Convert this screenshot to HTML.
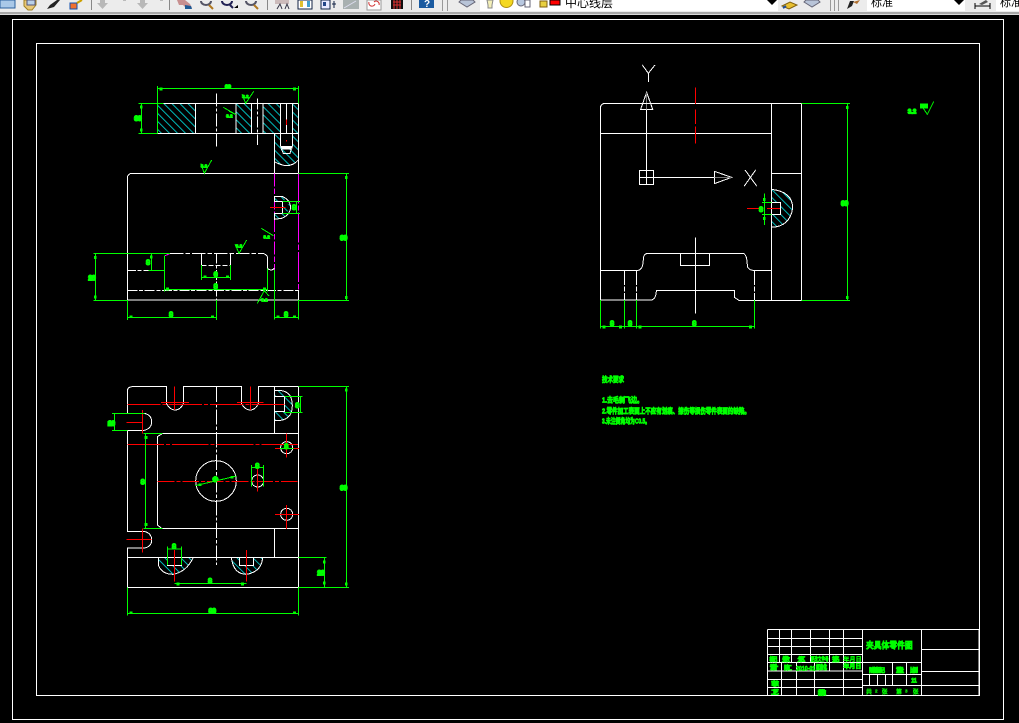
<!DOCTYPE html>
<html><head><meta charset="utf-8"><style>
html,body{margin:0;padding:0;background:#000;width:1019px;height:723px;overflow:hidden}
svg{display:block}
.w,.w *{fill:none;stroke:#fff;stroke-width:3}
.g,.g *{fill:none;stroke:#0f0;stroke-width:3}
.r,.r *{fill:none;stroke:#f00;stroke-width:3}
.m,.m *{fill:none;stroke:#f0f;stroke-width:3}
.a{fill:none;stroke:#0f0;stroke-width:8}
text{font-family:"Liberation Sans","Noto Sans CJK SC",sans-serif}
.d{font:bold 18px "Liberation Sans",sans-serif;fill:#0f0;stroke:#0f0;stroke-width:6;text-anchor:middle}
.t{font-family:"Liberation Sans","Noto Sans CJK SC",sans-serif;font-weight:700;fill:#0f0;stroke:#0f0;stroke-width:.8}
.tb{font-size:11px;fill:#000}
</style></head><body>
<svg width="1019" height="723" viewBox="0 0 1019 723" xmlns="http://www.w3.org/2000/svg">
<defs>
<pattern id="h" width="17" height="17" patternUnits="userSpaceOnUse" patternTransform="rotate(45)"><line x1="0" x2="17" y1="8" y2="8" stroke="#0ff" stroke-width="2.2"/></pattern>
</defs>
<rect width="1019" height="723" fill="#000"/>

<!-- toolbar -->
<rect width="1019" height="12" fill="#ececec"/>
<rect y="12" width="1019" height="2" fill="#a8a8a8"/>
<rect y="14" width="1019" height="1" fill="#dcdcdc"/>
<g>
<rect x="0" y="0" width="15" height="8" fill="#a9c8e8" stroke="#2a5f9e"/>
<path d="M24 0h12v5l-4 5h-4l-4-4z" fill="#e8c878" stroke="#a08020"/><rect x="27" y="0" width="8" height="5" fill="#b8d0e8" stroke="#557"/>
<path d="M47 9l3-4 7-5h3l-6 7z" fill="#222"/>
<rect x="70" y="3" width="7" height="6" fill="#f07030" stroke="#1050b0"/><path d="M77 3l5-3" stroke="#cca000" stroke-width="2"/>
<rect x="91" y="0" width="1" height="10" fill="#888"/>
<path d="M100 0h5v3h3l-5.500 6-5.500-6h3z" fill="#b8b8b8"/><rect x="123" y="0" width="3" height="1" fill="#bbb"/>
<path d="M140 0h5v3h3l-5.500 6-5.500-6h3z" fill="#b8b8b8"/><rect x="160" y="0" width="3" height="1" fill="#bbb"/>
<rect x="169" y="0" width="1" height="10" fill="#888"/>
<path d="M177 0h8l5 4 2 4h-6l-3-3h-4z" fill="#c89090"/><path d="M185 5l6 1 1 3h-7z" fill="#1f5a96"/>
<g fill="none" stroke-width="2"><path d="M201 1a5 4 0 0 0 10 0" stroke="#556"/><path d="M209 5l4 4" stroke="#b07820"/>
<path d="M222 1a5 4 0 0 0 10 0" stroke="#225"/><path d="M230 5l3 3" stroke="#225"/>
<path d="M246 1a5 4 0 0 0 10 0" stroke="#556"/><path d="M254 5l4 4" stroke="#b07820"/></g>
<path d="M234 8h4v-3z" fill="#000"/>
<rect x="267" y="0" width="1" height="10" fill="#888"/>
<rect x="275" y="0" width="14" height="4" fill="#cbb"/><path d="M277 9l3-5 2 5M285 9l2-5 2 5" stroke="#334" fill="none"/>
<rect x="298" y="0" width="14" height="9" fill="#fff" stroke="#124"/><rect x="300" y="1" width="3" height="6" fill="#e0c030"/><rect x="307" y="1" width="3" height="6" fill="#40a0d0"/>
<rect x="321" y="0" width="9" height="9" fill="#e8e8ff" stroke="#124"/><rect x="323" y="2" width="3" height="4" fill="#248"/><path d="M334 1v7M332 4h4" stroke="#124" fill="none"/>
<rect x="343" y="0" width="16" height="9" fill="#a8b0b0"/><path d="M344 8l12-7" stroke="#dde"/>
<rect x="367" y="0" width="14" height="10" fill="#fff" stroke="#999"/><path d="M369 2a3 3 0 0 0 6 2M374 2a3 3 0 0 1 5 3" stroke="#d03030" fill="none"/>
<rect x="391" y="0" width="12" height="9" fill="#111"/><path d="M393 2h8M393 5h8M394 0v9M397 0v9M400 0v9" stroke="#e03030" fill="none"/>
<rect x="411" y="0" width="1" height="10" fill="#888"/>
<rect x="419" y="0" width="15" height="8" fill="#1a5aa0"/><text x="424" y="7" font-size="10" font-weight="700" fill="#fff">?</text>
<rect x="442" y="0" width="1" height="11" fill="#999"/><rect x="447" y="0" width="1" height="11" fill="#999"/>
<path d="M459 2l8 5 8-5-2-2h-12z" fill="#b8c4d8" stroke="#667"/>
<rect x="480" y="0" width="298" height="11" fill="#fff"/>
<path d="M487 0h6l-1 5v3h-4v-3z" fill="#f4f0b8" stroke="#888"/>
<circle cx="506.500" cy="1" r="6.500" fill="#f4d820" stroke="#b09010"/>
<circle cx="521" cy="2" r="4" fill="#b8c8e0" stroke="#667"/><rect x="525" y="0" width="5" height="7" fill="none" stroke="#667"/>
<rect x="540" y="1" width="7" height="6" fill="#e8d040" stroke="#806010"/>
<rect x="550" y="0" width="10" height="5" fill="#f00" stroke="#000"/>
<text x="565" y="7" class="tb" style="font-size:12px">中心线层</text>
<path d="M767 0h10l-5 5z" fill="#000"/>
<path d="M782 6l8-4 7 3-8 4z" fill="#e8c030" stroke="#806010"/><path d="M783 8l3-2" stroke="#2050a0" stroke-width="2"/>
<path d="M804 2l8 5 8-5-2-2h-12z" fill="#b8c4d8" stroke="#667"/>
<rect x="830" y="0" width="1" height="11" fill="#999"/><rect x="834" y="0" width="1" height="11" fill="#999"/><rect x="838" y="0" width="1" height="11" fill="#999"/>
<path d="M847 9l3-8h4l-2 5z" fill="#222"/><path d="M853 2l7-2-3 4z" fill="#b07030"/>
<rect x="867" y="0" width="98" height="11" fill="#fff"/>
<text x="871" y="6" class="tb" fill="#333">标准</text>
<path d="M954 0h10l-5 5z" fill="#000"/>
<path d="M975 6h15M975 3v6M990 3v6" stroke="#000" fill="none"/><path d="M979 4l7-4 2 2-6 3z" fill="#555"/>
<rect x="996" y="0" width="23" height="11" fill="#fff"/>
<text x="1000" y="6" class="tb" fill="#333">标准</text>
</g>

<!-- frames -->
<rect x="12.500" y="19.500" width="991" height="700" fill="none" stroke="#fff"/>
<rect x="36.500" y="43.500" width="943" height="652" fill="none" stroke="#fff"/>

<!-- upper-left view -->
<g transform="translate(80,80) scale(.33333)" shape-rendering="crispEdges">
<path d="M232 70H347V160H232ZM468 70H515V160H468ZM549 70H601V160H549ZM637 70H655V160H637ZM583 160H601V200H637V160H655V240Q640 258 615 257Q595 252 583 245Z" fill="url(#h)"/>
<path d="M607 364L630 375V392L607 400ZM583 349H605Q625 358 607 364H583ZM583 400H607Q625 405 605 415H583Z" fill="url(#h)"/>
<path class="w" d="M232 70H655M232 160H655M347 70V160M468 70V160M515 70V160M549 70V160M601 70V200M637 70V200M232 70V160M655 70V280M583 160V280M601 200H637M604 207H634M604 207L610 220H630L634 207M583 245Q595 252 615 257Q640 258 655 240"/>
<path class="w" d="M601 202H637" style="stroke-width:6"/>
<path class="w" d="M409 40V203" stroke-dasharray="40 6 8 6"/>
<path class="w" d="M532 55V195" stroke-dasharray="34 6 8 6"/>
<path class="w" d="M619 70V118M619 135V160"/>
<path class="r" d="M619 118V135M619 180V184"/>
<path class="w" d="M142 660V295Q142 280 157 280H655M142 660H655M583 570V660M655 630V660"/>
<path class="m" d="M655 280V630" stroke-dasharray="90 6 16 6"/>
<path class="m" d="M583 280V570" stroke-dasharray="40 6 16 6"/>
<path class="m" d="M253 570V530Q253 527 268 522"/>
<path class="w" d="M142 631H655" stroke-dasharray="30 5 12 5"/>
<path class="w" d="M142 571H205" stroke-dasharray="26 5 12 5"/>
<path class="w" d="M270 520H548" stroke-dasharray="40 6 14 6"/>
<path class="w" d="M548 520Q558 522 562 530V565Q573 575 583 565"/>
<path class="w" d="M364 520V555M451 520V555"/>
<path class="w" d="M364 556H451" stroke-dasharray="16 5"/>
<path class="w" d="M409 520V660" stroke-dasharray="30 5 10 5"/>
<path class="w" d="M583 349H605Q630 358 632 382Q630 405 605 415L583 418V400H607V364H583Z"/>
<path class="r" d="M570 382H617"/>
<path class="g" d="M232 18V160M655 18V70M232 25H655M184 70V160M175 70H250M175 160H232M655 280H807M655 661H807M799 280V660M40 520H270M40 661H142M46 520V660M214 520V571M205 571H253M253 527V635M253 628H562M562 565V635M364 555V600M451 555V600M364 592H451M142 660V720M409 660V720M142 712H409M583 570V718M655 660V718M583 712H655M607 364H660M607 400H660M650 364V400"/>
<path class="a" d="M46 528v9M46 647v9M799 288v9M799 648v9M184 76v9M184 145v9M214 526v9M149 710h9M393 710h9M590 710h9M639 710h9M371 590h9M438 590h9M258 627h9M549 627h9M238 27h9M639 27h9"/>
<text class="d" x="444" y="24" style="font-size:14px">90</text>
<text class="d" x="174" y="122">30</text>
<text class="d" x="791" y="480">90</text>
<text class="d" x="36" y="600">26</text>
<text class="d" x="204" y="554">8</text>
<text class="d" x="407" y="626">8</text>
<text class="d" x="407" y="590">6</text>
<text class="d" x="273" y="710">8</text>
<text class="d" x="618" y="710">8</text>
<text class="d" x="642" y="389">8</text>
<path class="g" d="M362 250L373 280L395 240M486 42L497 70L521 34M430 82L468 104L448 94M465 492L477 520L500 480M544 445L580 467M532 670L553 632L567 648"/>
<text class="d" x="372" y="262" style="font-size:14px;stroke-width:3">3.2</text>
<text class="d" x="496" y="54" style="font-size:14px;stroke-width:3">3.2</text>
<text class="d" x="448" y="112" style="font-size:14px;stroke-width:3">3.2</text>
<text class="d" x="477" y="503" style="font-size:14px;stroke-width:3">3.2</text>
<text class="d" x="560" y="476" style="font-size:14px;stroke-width:3">3.2</text>
<text class="d" x="553" y="664" style="font-size:14px;stroke-width:3">3.2</text>
</g>

<!-- lower-left view -->
<g transform="translate(90,375) scale(.33333)" shape-rendering="crispEdges">
<path d="M553 47Q607 40 607 92Q607 140 553 137V110H583V65H553Z" fill="url(#h)"/>
<path d="M205 547V570Q215 598 250 598Q290 590 310 547H275V572H232V547Z" fill="url(#h)"/>
<path d="M424 547Q430 598 470 598Q515 590 518 547H490V572H449V547Z" fill="url(#h)"/>
<path class="w" d="M112 115V50Q112 35 127 35H229V85Q240 105 255 105Q272 105 280 85V35H454V85Q465 105 480 105Q497 105 505 85V35H625V637H112V519H163Q185 515 185 495Q185 475 163 469H112V166H163Q185 160 185 140Q185 120 163 115H112"/>
<path class="w" d="M160 175H625M215 460H625M202 185V450L215 460M202 185L215 177M553 35V175M553 460V547M112 547H625"/>
<path class="w" d="M553 47Q607 40 607 92Q607 140 553 137M553 65H583V110H553"/>
<circle class="w" cx="378" cy="318" r="61"/>
<circle class="w" cx="503" cy="318" r="18"/>
<circle class="w" cx="590" cy="218" r="18"/>
<circle class="w" cx="590" cy="418" r="18"/>
<path class="w" d="M379 35V570" stroke-dasharray="46 6 10 6"/>
<path class="w" d="M205 547V570Q215 598 250 598Q290 590 310 547M232 547V572H275V547M424 547Q430 598 470 598Q515 590 518 547M449 547V572H490V547"/>
<path class="r" d="M112 88H590" stroke-dasharray="100 6 12 6"/>
<path class="r" d="M112 208H627" stroke-dasharray="110 6 12 6"/>
<path class="r" d="M203 319H625" stroke-dasharray="50 6 12 6"/>
<path class="r" d="M253 35V105M481 35V105M213 82H297M441 82H521M157 105V175M110 142H157M157 460V533M110 493H185M590 175V248M555 220H627M502 280V350M590 390V462M555 418H627M253 525V620M469 525V620"/>
<path class="g" d="M625 35H777M625 637H777M769 35V637M625 547H710M703 547V637M112 637V722M625 637V722M112 715H625M253 625H469M167 175V460M160 175H218M160 460H218M73 115V166M66 115H163M66 166H112M632 65V112M583 65H638M583 112H638M232 515V570M275 515V570M232 522H275M484 270V335M521 270V335M484 278H521M316 332L440 303M570 220H610"/>
<path class="a" d="M769 41v9M769 622v9M703 556v9M703 620v9M119 713h9M609 713h9M259 627h9M453 627h9M168 183v9M168 444v9M325 329h9M421 307h9"/>
<text class="d" x="761" y="345">90</text>
<text class="d" x="693" y="600">26</text>
<text class="d" x="367" y="714">90</text>
<text class="d" x="360" y="624">8</text>
<text class="d" x="158" y="327">8</text>
<text class="d" x="64" y="151">16</text>
<text class="d" x="622" y="97">8</text>
<text class="d" x="252" y="521">8</text>
<text class="d" x="502" y="279">8</text>
<text class="d" x="376" y="320">Φ</text>
<text class="d" x="589" y="221">8</text>
</g>

<!-- right view -->
<g transform="translate(590,60) scale(.33333)" shape-rendering="crispEdges">
<path d="M544 388Q608 395 608 444Q600 500 544 502V464H572V427H544Z" fill="url(#h)"/>
<path class="w" d="M157 15L175 40L195 15M175 40V66M465 330L500 378M497 330L463 378M170 97V331M152 148H188L170 97ZM148 331H191V374H148ZM148 352H191M170 331V374M191 352H373M373 334V371L425 352Z"/>
<path d="M170 97V148M373 352H425" stroke="#777" stroke-width="3"/>
<path class="w" d="M31 720V146Q31 130 47 130H634V721H447L433 712V691H199Q199 715 185 720H31M544 130V720M31 220H544M544 340H634"/>
<path class="w" d="M544 388Q608 395 608 444Q600 500 544 502M524 427H572V464H524Z"/>
<path class="w" d="M31 631H145Q160 628 160 595Q162 580 175 580H460Q472 585 472 620Q478 631 490 631H544M271 580V616H358V580M316 532V760"/>
<path class="w" d="M103 631V720M139 631V720M493 631V720" stroke-dasharray="44 5 14 5"/>
<path class="r" d="M316 82V260" stroke-dasharray="50 16 44 8"/>
<path class="r" d="M471 445H520M531 445H570"/>
<path class="g" d="M634 130H780M634 721H780M772 130V720M31 720V805M103 720V805M139 720V805M493 720V805M31 799H493M523 400V495M516 427H545M516 464H545"/>
<path class="a" d="M772 138v9M772 708v9M38 801h9M87 801h9M146 801h9M477 801h9M523 414v9M523 471v9"/>
<text class="d" x="764" y="436">90</text>
<text class="d" x="66" y="797">8</text>
<text class="d" x="120" y="797">8</text>
<text class="d" x="313" y="797">8</text>
<text class="d" x="513" y="455">8</text>
<text class="d" x="966" y="160" style="stroke-width:4">3.2</text>
<rect x="990" y="130" width="24" height="15" fill="#0f0"/>
<path class="g" d="M1000 145L1012 163L1031 125"/>
</g>

<!-- technical notes -->
<g>
<text class="t" x="602" y="382" font-size="7.500" textLength="22" lengthAdjust="spacingAndGlyphs">技术要求</text>
<text class="t" x="602" y="402.500" font-size="7.500" textLength="41" lengthAdjust="spacingAndGlyphs">1.去毛刺飞边。</text>
<text class="t" x="602" y="413.500" font-size="7.500" textLength="148" lengthAdjust="spacingAndGlyphs">2.零件加工表面上不应有划痕、擦伤等损伤零件表面的缺陷。</text>
<text class="t" x="602" y="423.500" font-size="7.500" textLength="48" lengthAdjust="spacingAndGlyphs">3.未注倒角均为C0.5。</text>
</g>

<!-- title block -->
<g transform="translate(760,620) scale(.33333)" shape-rendering="crispEdges">
<path class="w" d="M22 28H657M22 28V227M22 55H307M22 79H307M22 103H307M22 127H484M22 153H307M22 178H307M22 203H307M0 227H657M58 28V127M94 28V127M151 28V127M208 28V127M250 28V227M307 28V227M64 127V227M109 127V227M164 127V227M208 127V153M484 28V227M657 28V227M307 163H484M307 196H657M397 127V196M439 127V196M328 163V196M352 163V196M376 163V196M484 88H657M484 154H657"/>
<text class="t" x="318" y="86" font-size="27" textLength="140" lengthAdjust="spacingAndGlyphs" style="stroke-width:2">夹具体零件图</text>
<g class="lab" font-size="18">
<text class="t" x="28" y="124" textLength="24" style="stroke-width:2">标记</text>
<text class="t" x="66" y="124" textLength="24" style="stroke-width:2">处数</text>
<text class="t" x="112" y="124" textLength="24" style="stroke-width:2">分区</text>
<text class="t" x="152" y="124" textLength="54" lengthAdjust="spacingAndGlyphs" style="stroke-width:2">更改文件号</text>
<text class="t" x="216" y="124" textLength="24" style="stroke-width:2">签名</text>
<text class="t" x="250" y="124" textLength="55" style="stroke-width:1">年 月 日</text>
<text class="t" x="30" y="148" textLength="24" style="stroke-width:3">设计</text>
<text class="t" x="72" y="150" textLength="24" style="stroke-width:2">陈工</text>
<text class="t" x="108" y="152" textLength="58" lengthAdjust="spacingAndGlyphs" style="stroke-width:2">2010-01</text>
<text class="t" x="168" y="148" textLength="33" lengthAdjust="spacingAndGlyphs" style="stroke-width:3">标准化</text>
<text class="t" x="250" y="146" textLength="54" style="stroke-width:2">年月日</text>
<text class="t" x="33" y="198" textLength="24" style="stroke-width:2">审核</text>
<text class="t" x="33" y="224" textLength="24" style="stroke-width:2">工艺</text>
<text class="t" x="174" y="225" textLength="24" style="stroke-width:3">批准</text>
<text class="t" x="327" y="157" textLength="48" style="stroke-width:2.500">阶段标记</text>
<text class="t" x="408" y="157" textLength="24" style="stroke-width:2.500">重量</text>
<text class="t" x="450" y="157" textLength="24" style="stroke-width:2.500">比例</text>
<text class="t" x="453" y="187" textLength="18" style="stroke-width:2">1:1</text>
<text class="t" x="318" y="222">共</text>
<text class="t" x="345" y="218" font-size="14">2</text>
<text class="t" x="365" y="222">张</text>
<text class="t" x="408" y="222">第</text>
<text class="t" x="435" y="218" font-size="14">3</text>
<text class="t" x="458" y="222">张</text>
</g>
</g>
</svg>
</body></html>
